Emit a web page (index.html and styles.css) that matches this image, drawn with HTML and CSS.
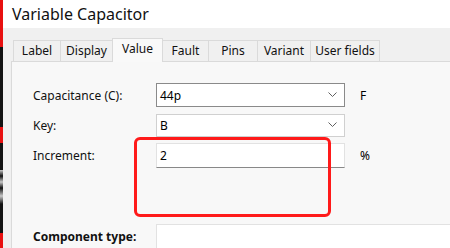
FILE: index.html
```html
<!DOCTYPE html>
<html lang="en">
  <head>
    <meta charset="UTF-8" />
    <meta name="viewport" content="width=device-width, initial-scale=1.0" />
    <title>Variable Capacitor</title>
    <link rel="stylesheet" href="styles.css">
  </head>
  <body>
    <!-- edge of the window behind -->
    <div class="edge"></div>

    <div class="dialog">
      <div class="titlebar">Variable Capacitor</div>

      <div class="content">
        <div class="tabs">
          <div class="tab w-label">Label</div>
          <div class="tab w-display">Display</div>
          <div class="tab w-value active">Value</div>
          <div class="tab w-fault">Fault</div>
          <div class="tab w-pins">Pins</div>
          <div class="tab w-variant">Variant</div>
          <div class="tab w-user">User fields</div>
        </div>

        <div class="panel">
          <div class="row">
            <div class="label">Capacitance (C):</div>
            <div class="field combo">
              <span>44p</span>
              <svg class="chev" width="9" height="6" viewBox="0 0 9 6">
                <polyline points="0.5,0.5 4.5,4.5 8.5,0.5" fill="none" stroke="#606060" stroke-width="1" />
              </svg>
            </div>
            <div class="unit">F</div>
          </div>
          <div class="row">
            <div class="label">Key:</div>
            <div class="field combo soft">
              <span>B</span>
              <svg class="chev" width="9" height="6" viewBox="0 0 9 6">
                <polyline points="0.5,0.5 4.5,4.5 8.5,0.5" fill="none" stroke="#606060" stroke-width="1" />
              </svg>
            </div>
          </div>
          <div class="row">
            <div class="label">Increment:</div>
            <div class="field text">
              <span>2</span>
            </div>
            <div class="unit">%</div>
          </div>

          <div class="row type-row">
            <div class="label bold">Component type:</div>
            <div class="field wide"></div>
          </div>

          <!-- highlight drawn over the form -->
          <div class="mark"></div>
        </div>
      </div>
    </div>
  </body>
</html>
```

FILE: styles.css
```css
body {
  margin: 0;
  padding: 0;
  width: 450px;
  height: 248px;
  overflow: hidden;
  display: flex;
  font-family: "Noto Sans", "Open Sans", sans-serif;
  font-size: 12px;
  color: #000;
  background: #efefef;
}

.edge {
  width: 3px;
  flex: none;
  background: linear-gradient(
    to bottom,
    #e81010 0,
    #e81010 47px,
    #111 47px,
    #111 127px,
    #e81010 127px,
    #e81010 143px,
    #111 143px,
    #111 170px,
    #c8c8c8 170px,
    #111 176px,
    #c8c8c8 182px,
    #111 188px,
    #c8c8c8 196px,
    #111 204px,
    #111 233px,
    #e81010 233px
  );
}

.dialog {
  flex: 1;
  display: flex;
  flex-direction: column;
}

.titlebar {
  height: 31px;
  background: #fff;
  padding-left: 9px;
  font-size: 16px;
  line-height: 28px;
  color: #111;
}

.content {
  flex: 1;
  background: #f0f0f0;
  padding: 10px 0 0 8px;
  display: flex;
  flex-direction: column;
}

.tabs {
  display: flex;
  align-items: flex-end;
  padding-left: 2px;
  height: 23px;
}

.tab {
  box-sizing: border-box;
  height: 21px;
  line-height: 19px;
  text-align: center;
  background: #f0f0f0;
  border: 1px solid #dadada;
  border-bottom: none;
  margin-right: -1px;
  color: #111;
}

.w-label { width: 48px; }
.w-display { width: 53px; }
.w-value { width: 51px; }
.w-fault { width: 47px; }
.w-pins { width: 50px; }
.w-variant { width: 54px; }
.w-user { width: 70px; }

.tab.active {
  height: 24px;
  line-height: 20px;
  background: #f9f9f9;
  position: relative;
  z-index: 1;
  margin-bottom: -1px;
}

.panel {
  flex: 1;
  position: relative;
  background: #f8f8f8;
  border-top: 1px solid #dadada;
  border-left: 1px solid #dadada;
  padding: 21px 0 0 21px;
  display: flex;
  flex-direction: column;
  gap: 6px;
}

.row {
  display: flex;
  align-items: center;
  height: 24px;
}

.label {
  width: 123px;
  color: #111;
}

.label.bold {
  font-weight: bold;
}

.field {
  box-sizing: border-box;
  width: 189px;
  height: 24px;
  background: #fff;
  border: 1px solid #d6d6d6;
  display: flex;
  align-items: center;
  justify-content: space-between;
  padding: 0 7px 0 3px;
}

.field.combo {
  border-color: #8a8a8a;
}

.field.combo.soft {
  border-color: #d0d0d0;
  height: 23px;
}

.field.text {
  border-color: #e2e2e2;
  border-bottom-color: #888;
  height: 25px;
}

.field.wide {
  flex: 1;
  border-right: none;
  border-bottom: none;
  border-color: #e2e2e2;
}

.unit {
  margin-left: 15px;
}

.type-row {
  margin-top: 51px;
  align-items: flex-start;
}

.type-row .label {
  padding-top: 4px;
}

.mark {
  position: absolute;
  left: 122px;
  top: 75px;
  width: 191px;
  height: 74px;
  border: 3px solid #ff1a1a;
  border-radius: 6px;
}
```
